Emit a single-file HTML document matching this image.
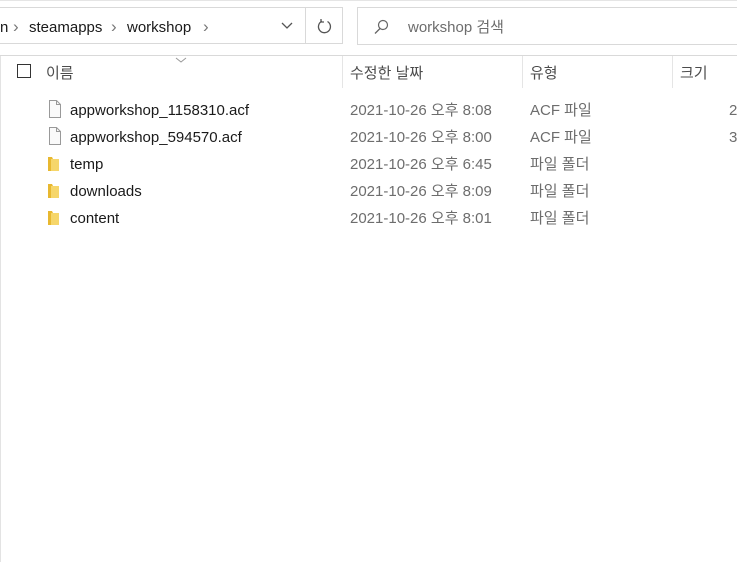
<!DOCTYPE html>
<html><head><meta charset="utf-8"><style>
body{margin:0;width:737px;height:562px;background:#fff;position:relative;overflow:hidden;font-family:"Liberation Sans","Noto Sans CJK KR",sans-serif;font-size:15px;line-height:18px;color:#1a1a1a}
.a{position:absolute;white-space:nowrap}
.t{margin-top:2px}
.g{color:#6d6d6d}
.c{color:#777;font-size:17px}
</style></head><body>
<div class="a" style="left:0;top:0;width:737px;height:1px;background:#e5e5e5"></div>
<div class="a" style="left:-2px;top:7px;width:345px;height:37px;border:1px solid #d9d9d9;box-sizing:border-box"></div>
<div class="a" style="left:305px;top:8px;width:1px;height:36px;background:#d9d9d9"></div>
<div class="a" style="left:357px;top:7px;width:380px;height:38px;border:1px solid #d9d9d9;box-sizing:border-box;border-right:none"></div>
<div class="a t" style="left:0;top:17px">n</div>
<div class="a c t" style="left:13px;top:16px">›</div>
<div class="a t" style="left:29px;top:17px">steamapps</div>
<div class="a c t" style="left:111px;top:16px">›</div>
<div class="a t" style="left:127px;top:17px">workshop</div>
<div class="a c t" style="left:203px;top:16px">›</div>
<svg class="a" style="left:281px;top:22px" width="12" height="8"><path d="M1 1l5 5 5-5" stroke="#555" fill="none" stroke-width="1.3"/></svg>
<svg class="a" style="left:317px;top:18px" width="16" height="16"><path d="M10.5 3.5A6 6 0 1 1 5 3.2" stroke="#555" fill="none" stroke-width="1.3"/><path d="M4 1v3h3" stroke="#555" fill="none" stroke-width="1.3"/></svg>
<svg class="a" style="left:373px;top:19px" width="16" height="16"><circle cx="10" cy="6" r="4.5" stroke="#666" fill="none" stroke-width="1.2"/><path d="M7 9.5L2 14.5" stroke="#666" stroke-width="1.3"/></svg>
<div class="a t" style="left:408px;top:17px;color:#6d6d6d">workshop 검색</div>
<div class="a" style="left:0;top:55px;width:737px;height:1px;background:#d9d9d9"></div>
<div class="a" style="left:0;top:56px;width:1px;height:506px;background:#e3e3e3"></div>
<svg class="a" style="left:175px;top:57px" width="12" height="6"><path d="M1 1l5 4 5-4" stroke="#999" fill="none"/></svg>
<div class="a" style="left:17px;top:64px;width:14px;height:14px;border:1px solid #333;box-sizing:border-box"></div>
<div class="a t" style="left:46px;top:63px;color:#4c4c4c">이름</div>
<div class="a" style="left:342px;top:56px;width:1px;height:32px;background:#e5e5e5"></div>
<div class="a t" style="left:350px;top:63px;color:#4c4c4c">수정한 날짜</div>
<div class="a" style="left:522px;top:56px;width:1px;height:32px;background:#e5e5e5"></div>
<div class="a t" style="left:530px;top:63px;color:#4c4c4c">유형</div>
<div class="a" style="left:672px;top:56px;width:1px;height:32px;background:#e5e5e5"></div>
<div class="a t" style="left:680px;top:63px;color:#4c4c4c">크기</div>

<svg class="a" style="left:48px;top:100px" width="14" height="18"><path d="M1.5 .5h7l4 4v13h-11z" fill="#fafafa" stroke="#999"/><path d="M8.5 .5v4h4" fill="none" stroke="#999"/></svg>
<div class="a t" style="left:70px;top:100px">appworkshop_1158310.acf</div>
<div class="a g t" style="left:350px;top:100px">2021-10-26 오후 8:08</div>
<div class="a g t" style="left:530px;top:100px">ACF 파일</div>
<div class="a g t" style="left:729px;top:100px">2</div>

<svg class="a" style="left:48px;top:127px" width="14" height="18"><path d="M1.5 .5h7l4 4v13h-11z" fill="#fafafa" stroke="#999"/><path d="M8.5 .5v4h4" fill="none" stroke="#999"/></svg>
<div class="a t" style="left:70px;top:127px">appworkshop_594570.acf</div>
<div class="a g t" style="left:350px;top:127px">2021-10-26 오후 8:00</div>
<div class="a g t" style="left:530px;top:127px">ACF 파일</div>
<div class="a g t" style="left:729px;top:127px">3</div>

<svg class="a" style="left:47px;top:156px" width="14" height="16"><path d="M1 1h4l1 2h0v12H1z" fill="#e8b830"/><path d="M4 3h8v12H4z" fill="#f6d66a"/></svg>
<div class="a t" style="left:70px;top:154px">temp</div>
<div class="a g t" style="left:350px;top:154px">2021-10-26 오후 6:45</div>
<div class="a g t" style="left:530px;top:154px">파일 폴더</div>

<svg class="a" style="left:47px;top:183px" width="14" height="16"><path d="M1 1h4l1 2h0v12H1z" fill="#e8b830"/><path d="M4 3h8v12H4z" fill="#f6d66a"/></svg>
<div class="a t" style="left:70px;top:181px">downloads</div>
<div class="a g t" style="left:350px;top:181px">2021-10-26 오후 8:09</div>
<div class="a g t" style="left:530px;top:181px">파일 폴더</div>

<svg class="a" style="left:47px;top:210px" width="14" height="16"><path d="M1 1h4l1 2h0v12H1z" fill="#e8b830"/><path d="M4 3h8v12H4z" fill="#f6d66a"/></svg>
<div class="a t" style="left:70px;top:208px">content</div>
<div class="a g t" style="left:350px;top:208px">2021-10-26 오후 8:01</div>
<div class="a g t" style="left:530px;top:208px">파일 폴더</div>
</body></html>
